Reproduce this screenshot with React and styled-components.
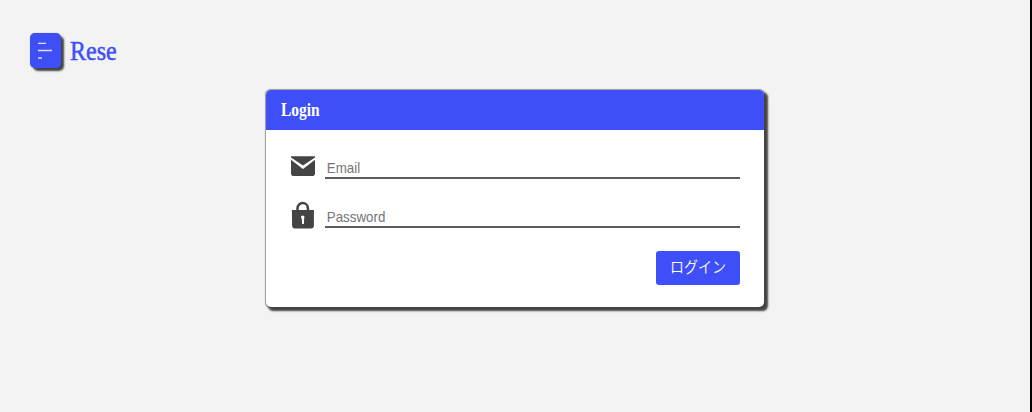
import React from "react";
import styled, { createGlobalStyle } from "styled-components";

const Global = createGlobalStyle`
  * { box-sizing: border-box; }
  body { margin: 0; background: #f3f3f3; }
`;

const Page = styled.div`
  height: 412px;
  padding: 33px 0 0 30px;
  background: #f3f3f3;
  border-right: 2px solid #000;
  overflow: hidden;
  font-family: "Liberation Serif", "Noto Sans CJK JP", serif;
`;

const Header = styled.header`
  display: flex;
  align-items: center;
  height: 35px;
`;

const MenuButton = styled.button`
  display: block;
  width: 31px;
  height: 35px;
  padding: 0;
  border: 0;
  border-radius: 5px;
  background: #3e4ff8;
  box-shadow: 3px 3px 2px #444, 0 0 1px #8a8a9a;
`;

const Brand = styled.h1`
  margin: 0 0 0 9px;
  padding-top: 2px;
  font-size: 27px;
  line-height: 35px;
  font-weight: 400;
  color: #3e4ff8;
  -webkit-text-stroke: 0.5px #3e4ff8;
  transform: scaleX(0.89);
  transform-origin: left;
`;

const Card = styled.main`
  width: 498px;
  height: 217px;
  margin: 22px 0 0 236px;
  border-radius: 5px;
  background: #fff;
  box-shadow: 3px 3px 2px 0.5px #444, 0 0 1px 0.5px #999;
`;

const CardTitle = styled.h2`
  height: 40px;
  margin: 0;
  padding-left: 15px;
  border-radius: 5px 5px 0 0;
  background: #3e4ff8;
  color: #fff;
  font-size: 18px;
  line-height: 41px;
  font-weight: 700;
  span {
    display: inline-block;
    transform: scaleX(0.86);
    transform-origin: left;
  }
`;

const Form = styled.form`
  display: flex;
  flex-direction: column;
  padding: 21px 24px 0 25px;
`;

const Field = styled.label`
  display: flex;
  height: 28px;
  margin-bottom: ${(p) => p.$gap}px;
  svg { display: block; flex: none; overflow: visible; }
`;

const Line = styled.div`
  flex: 1;
  margin-left: 10px;
  border-bottom: 2px solid #5f5b5b;
`;

const Input = styled.input`
  display: block;
  width: 100%;
  height: 26px;
  padding: 6px 2px 0;
  border: 0;
  outline: 0;
  background: transparent;
  font: 15px "Liberation Sans", Arial, sans-serif;
  transform: scaleX(0.89);
  transform-origin: left;
  &::placeholder { color: #757575; opacity: 1; }
`;

const Submit = styled.button`
  align-self: flex-end;
  width: 84px;
  height: 34px;
  padding: 0 0 2px;
  border: 0;
  border-radius: 3px;
  background: #3e4ff8;
  color: #fff;
  font: 350 15.5px/32px "Noto Sans CJK JP", sans-serif;
  span {
    display: inline-block;
    transform: translateY(-1px) scaleX(0.9);
  }
`;

const MenuIcon = () => (
  <svg width="31" height="35" viewBox="0 0 31 35" stroke="#dfe2ff" strokeWidth="1.4">
    <path d="M8 10.4h8M8 17.5h14M8 25h4" />
  </svg>
);

const MailIcon = () => (
  <svg width="24" height="28" viewBox="0 0 24 28" fill="#454343">
    <path d="M0 5.2h24v1.2L12 14.5 0 6.4z" />
    <path d="M0 8.8l12 9.2 12-9.2v13.4q0 2.8-2.8 2.8H2.8Q0 25 0 22.2z" />
  </svg>
);

const LockIcon = () => (
  <svg width="24" height="28" viewBox="0 -1 24 28">
    <path d="M6.5 11V7.2a5.2 5.2 0 0 1 10.4 0V11" fill="none" stroke="#454343" strokeWidth="2.5" />
    <path d="M.9 9h22v15.5q0 3-3 3H3.9q-2.8 0-2.8-3z" fill="#454343" />
    <path d="M10.2 15.2q1.3-1.3 2.9-.3.9 1.2 0 2.8l-.2 5.3h-1.8l-.3-5q-1.1-1.4-.6-2.8z" fill="#fff" />
  </svg>
);

export default function App() {
  return (
    <>
      <Global />
      <Page>
        <Header>
          <MenuButton type="button" aria-label="Menu"><MenuIcon /></MenuButton>
          <Brand>Rese</Brand>
        </Header>
        <Card>
          <CardTitle><span>Login</span></CardTitle>
          <Form>
            <Field $gap={21}>
              <MailIcon />
              <Line><Input type="email" placeholder="Email" /></Line>
            </Field>
            <Field $gap={23}>
              <LockIcon />
              <Line><Input type="password" placeholder="Password" /></Line>
            </Field>
            <Submit type="button"><span>ログイン</span></Submit>
          </Form>
        </Card>
      </Page>
    </>
  );
}
